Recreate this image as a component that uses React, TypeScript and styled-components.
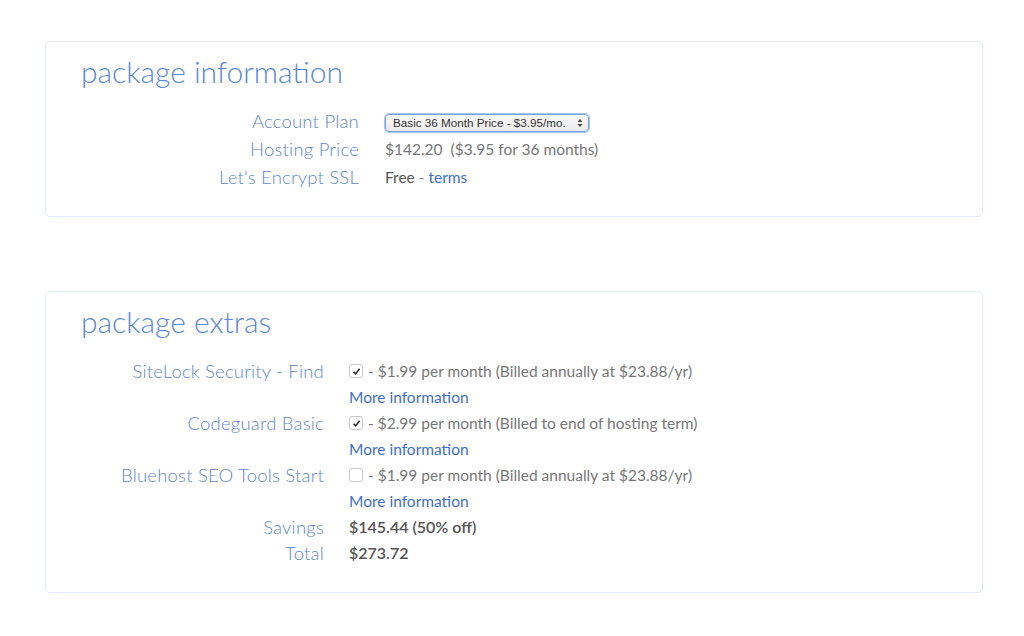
import React from 'react';
import styled, { createGlobalStyle } from 'styled-components';

const GlobalStyle = createGlobalStyle`
  html, body {
    margin: 0;
    padding: 0;
    background: #ffffff;
  }
  body {
    font-family: Lato, "Open Sans", sans-serif;
    color: #777777;
  }
`;

const Page = styled.main`
  padding: 41px 41px 0 45px;
  display: flex;
  flex-direction: column;
  gap: 74px;
`;

const Card = styled.section<{ bottom: number }>`
  width: 938px;
  box-sizing: border-box;
  border: 1px solid #e1eaf6;
  border-radius: 5px;
  padding: 9px 0 ${({ bottom }) => bottom}px 35px;
`;

const Title = styled.h2`
  margin: 0;
  font-size: 30px;
  line-height: 40px;
  font-weight: 300;
  color: #5a88da;
`;

const Grid = styled.div<{ labelWidth: number; gap: number; top: number; rowHeight: number }>`
  display: grid;
  grid-template-columns: ${({ labelWidth }) => labelWidth}px auto;
  column-gap: ${({ gap }) => gap}px;
  margin-top: ${({ top }) => top}px;
  line-height: ${({ rowHeight }) => rowHeight}px;
  align-items: start;
`;

const Label = styled.div`
  text-align: right;
  font-size: 18.5px;
  letter-spacing: 0.2px;
  font-weight: 300;
  color: #5f87cc;
  white-space: nowrap;
`;

const Value = styled.div<{ strong?: boolean }>`
  font-size: ${({ strong }) => (strong ? '16px' : '15.5px')};
  color: ${({ strong }) => (strong ? '#555555' : '#777777')};
  font-weight: ${({ strong }) => (strong ? 600 : 400)};
  white-space: nowrap;
`;

const Link = styled.a`
  color: #3f6fcb;
  text-decoration: none;
`;

const Dash = styled.span`
  color: #8a8a8a;
`;

const Free = styled.span`
  color: #555555;
`;

const Select = styled.div`
  display: inline-flex;
  align-items: center;
  justify-content: space-between;
  box-sizing: border-box;
  width: 204px;
  height: 18px;
  margin-top: 7px;
  padding: 0 5px 0 7px;
  border: 1px solid #7aa2e0;
  box-shadow: 0 0 0 1px #a8c4ee;
  border-radius: 4px;
  background: linear-gradient(#fbfbfb, #e9e9e9);
  font-family: "Liberation Sans", Arial, sans-serif;
  font-size: 11.7px;
  line-height: 16px;
  color: #333;
  vertical-align: top;
`;

const Arrows = styled.svg`
  width: 6px;
  height: 10px;
`;

const Row = styled.div`
  display: flex;
  align-items: center;
  gap: 4px;
`;

const Check = styled.span`
  display: inline-flex;
  align-items: center;
  justify-content: center;
  width: 12px;
  height: 12px;
  border: 1px solid #c9c9c9;
  border-radius: 3px;
  background: #fff;
  margin-right: 1px;
`;

const CheckBox = ({ checked }: { checked: boolean }) => (
  <Check>
    {checked && (
      <svg width="9" height="9" viewBox="0 0 10 10">
        <path d="M1.8 5.2 L4 7.6 L8.4 2" fill="none" stroke="#222" strokeWidth="1.6" />
      </svg>
    )}
  </Check>
);

type Extra = { name: string; checked: boolean; text: string };

const extras: Extra[] = [
  { name: 'SiteLock Security - Find', checked: true, text: '$1.99 per month (Billed annually at $23.88/yr)' },
  { name: 'Codeguard Basic', checked: true, text: '$2.99 per month (Billed to end of hosting term)' },
  { name: 'Bluehost SEO Tools Start', checked: false, text: '$1.99 per month (Billed annually at $23.88/yr)' },
];

export default function App() {
  return (
    <>
      <GlobalStyle />
      <Page>
        <Card bottom={25}>
          <Title>package information</Title>
          <Grid labelWidth={278} gap={26} top={16} rowHeight={28}>
            <Label>Account Plan</Label>
            <Value>
              <Select>
                <span>Basic 36 Month Price - $3.95/mo.</span>
                <Arrows viewBox="0 0 6 10">
                  <path d="M0.5 4 L3 1 L5.5 4 Z M0.5 6 L3 9 L5.5 6 Z" fill="#444" />
                </Arrows>
              </Select>
            </Value>
            <Label>Hosting Price</Label>
            <Value>$142.20&nbsp;&nbsp;($3.95 for 36 months)</Value>
            <Label>Let's Encrypt SSL</Label>
            <Value>
              <Free>Free</Free> <Dash>-</Dash> <Link href="#">terms</Link>
            </Value>
          </Grid>
        </Card>

        <Card bottom={26}>
          <Title>package extras</Title>
          <Grid labelWidth={243} gap={25} top={17} rowHeight={26}>
            {extras.map((e) => (
              <React.Fragment key={e.name}>
                <Label>{e.name}</Label>
                <Value>
                  <Row>
                    <CheckBox checked={e.checked} />
                    <span>- {e.text}</span>
                  </Row>
                  <div>
                    <Link href="#">More information</Link>
                  </div>
                </Value>
              </React.Fragment>
            ))}
            <Label>Savings</Label>
            <Value strong>$145.44 (50% off)</Value>
            <Label>Total</Label>
            <Value strong>$273.72</Value>
          </Grid>
        </Card>
      </Page>
    </>
  );
}
